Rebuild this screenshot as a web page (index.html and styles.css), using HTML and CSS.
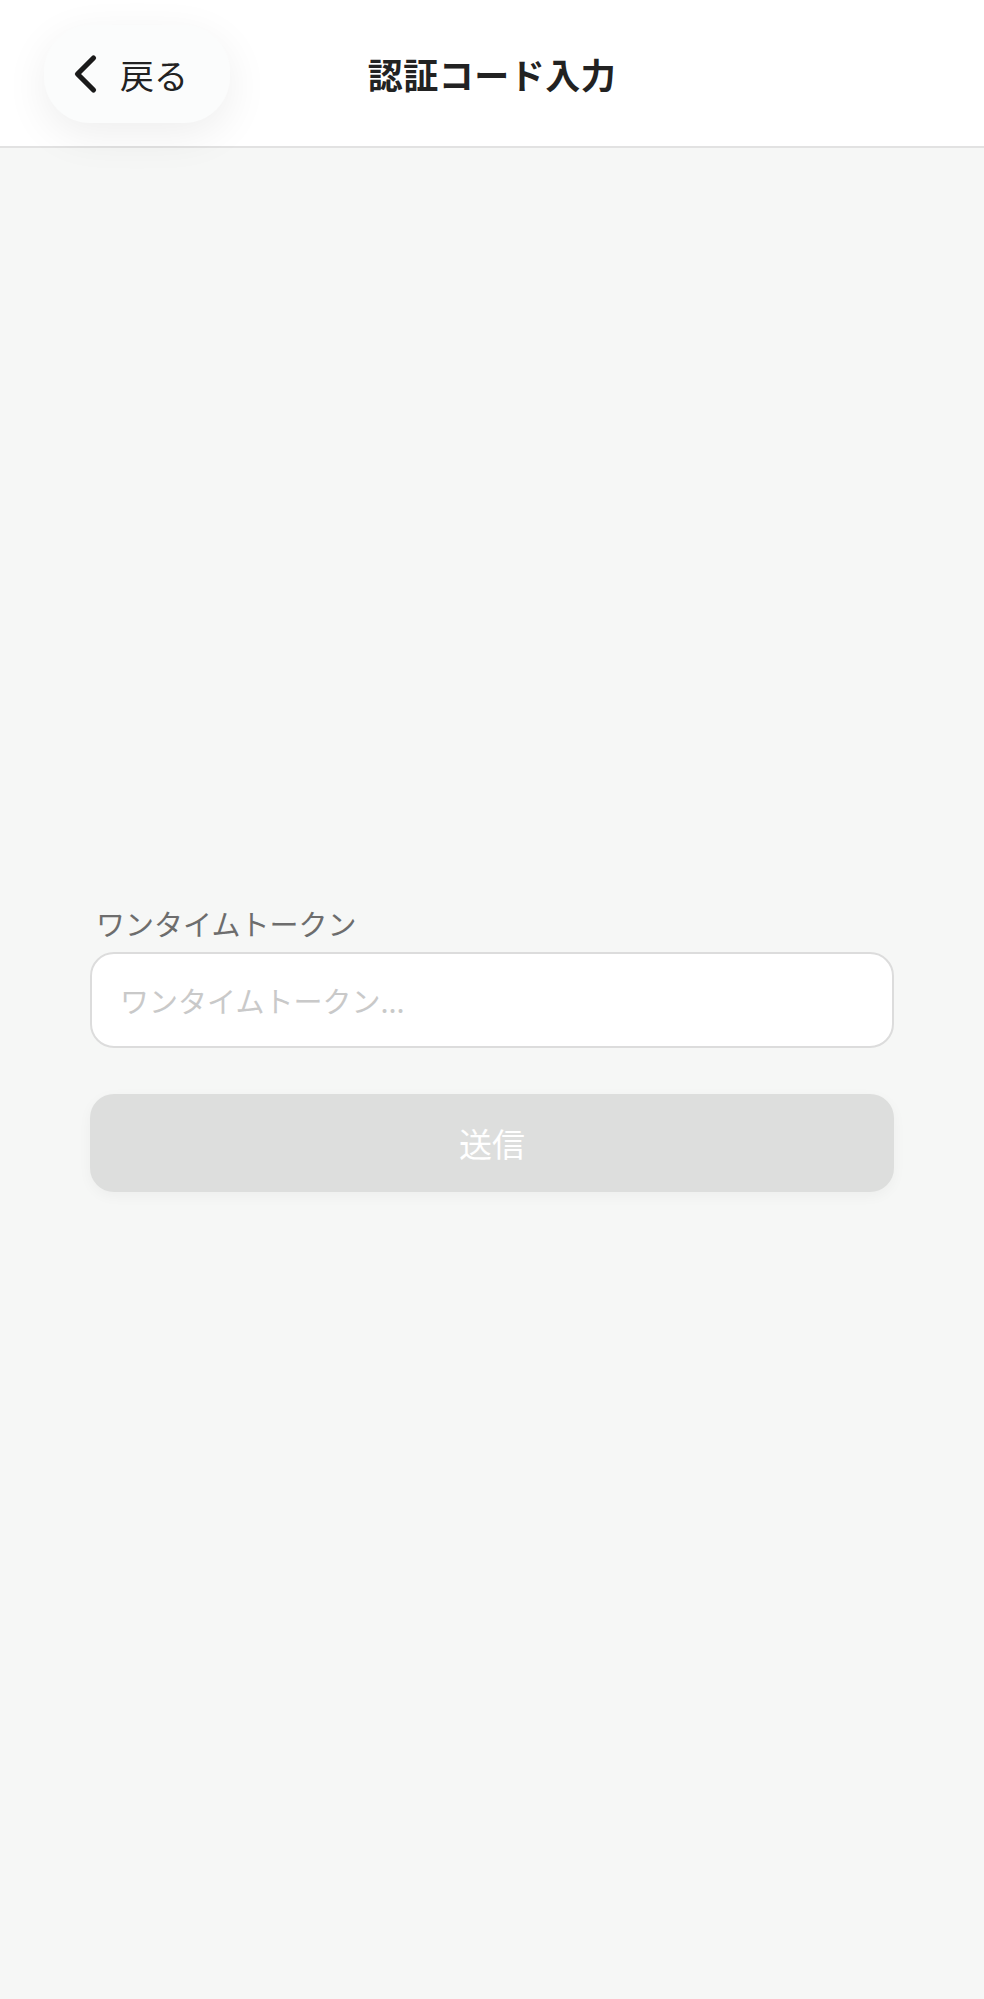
FILE: index.html
```html
<!DOCTYPE html>
<html lang="ja">
<head>
  <meta charset="UTF-8">
  <meta name="viewport" content="width=device-width, initial-scale=1.0">
  <title>認証コード入力</title>
  <link rel="stylesheet" href="styles.css">
</head>
<body>
  <header class="topbar">
    <div class="topbar-left">
      <button class="back-btn" type="button">
        <svg class="back-icon" viewBox="0 0 26 40" width="26" height="40" aria-hidden="true">
          <path d="M21.5 4 L5.5 20 L21.5 36" fill="none" stroke="#1a1a1a" stroke-width="5.2" stroke-linecap="round" stroke-linejoin="round"/>
        </svg>
        <span>戻る</span>
      </button>
    </div>
    <h1 class="title">認証コード入力</h1>
    <div></div>
  </header>

  <main class="form-wrap">
    <form class="token-form" onsubmit="return false;">
      <label class="field-label" for="token">ワンタイムトークン</label>
      <input class="field-input" id="token" type="text" placeholder="ワンタイムトークン...">
      <button class="submit-btn" type="submit" disabled>送信</button>
    </form>
  </main>
</body>
</html>
```

FILE: styles.css
```css
:root {
  --bg: #f6f7f6;
  --text: #1f1f1f;
  --muted: #6d6d6d;
  --border: #dcdcdc;
  --disabled: #dddedd;
}
* {
  box-sizing: border-box;
}
body {
  margin: 0;
  min-height: 1999px;
  background: var(--bg);
  color: var(--text);
  font-family: "Noto Sans CJK JP", "Noto Sans", sans-serif;
}
.topbar {
  height: 148px;
  background: #fff;
  border-bottom: 2px solid #e2e2e2;
  display: grid;
  grid-template-columns: 1fr auto 1fr;
  align-items: center;
}
.topbar-left {
  padding-left: 44px;
  padding-top: 2px;
}
.back-btn {
  width: 186px;
  height: 98px;
  border: none;
  border-radius: 46px;
  background: #fbfcfc;
  box-shadow: 0 12px 44px rgba(0, 0, 0, .07);
  display: flex;
  align-items: center;
  gap: 22px;
  padding: 0 0 0 28px;
  font-family: inherit;
  font-size: 34px;
  color: #222;
  cursor: pointer;
}
.back-icon {
  flex: none;
}
.title {
  margin: 0;
  font-size: 35px;
  font-weight: 700;
  color: #222;
  letter-spacing: .5px;
}
.form-wrap {
  padding: 755px 90px 0;
}
.token-form {
  display: flex;
  flex-direction: column;
}
.field-label {
  font-size: 29px;
  line-height: 40px;
  color: var(--muted);
  padding-left: 6px;
}
.field-input {
  margin-top: 9px;
  height: 96px;
  border: 2px solid var(--border);
  border-radius: 24px;
  background: #fff;
  padding: 0 28px;
  font-family: inherit;
  font-size: 29px;
  color: var(--text);
  outline: none;
}
.field-input::placeholder {
  color: #c9c9c9;
}
.submit-btn {
  margin-top: 46px;
  height: 98px;
  border: none;
  border-radius: 24px;
  background: var(--disabled);
  box-shadow: 0 4px 14px rgba(0, 0, 0, .04);
  color: #fff;
  font-family: inherit;
  font-size: 33px;
}
```
